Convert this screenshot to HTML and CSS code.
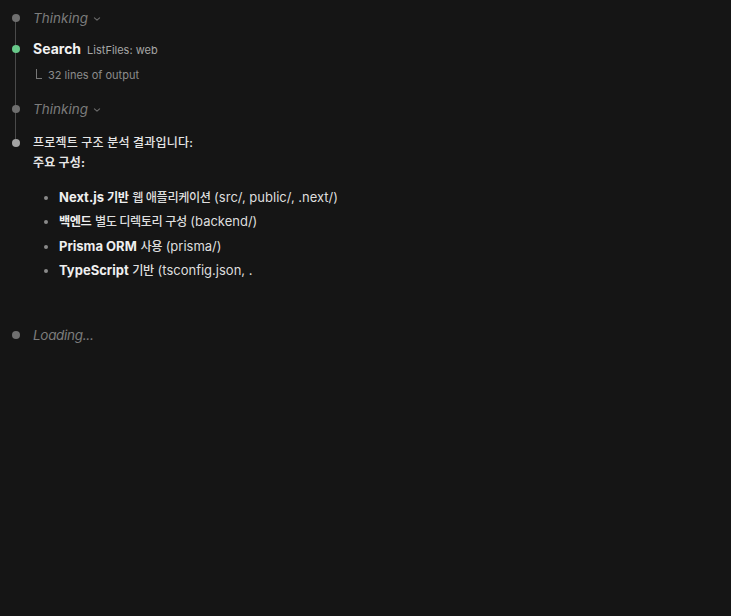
FILE: index.html
```html
<!DOCTYPE html>
<html lang="ko">
<head>
<meta charset="utf-8">
<link rel="stylesheet" href="styles.css">
</head>
<body>
<div class="timeline">
  <div class="step step-thinking first">
    <span class="rail"><span class="dot dot-gray"></span></span>
    <span class="thinking">Thinking<svg class="chev" width="8" height="6" viewBox="0 0 8 6"><path d="M1.4 1.8 L4 4.2 L6.6 1.8" fill="none" stroke="currentColor" stroke-width="1.1" stroke-linecap="round" stroke-linejoin="round"/></svg></span>
  </div>
  <div class="step step-search">
    <span class="rail"><span class="dot dot-green"></span></span>
    <div class="body">
      <div class="search-line"><span class="search-title">Search</span><span class="search-arg">ListFiles: web</span></div>
      <div class="sub"><span class="elbow"></span>32 lines of output</div>
    </div>
  </div>
  <div class="step step-thinking2">
    <span class="rail"><span class="dot dot-gray"></span></span>
    <span class="thinking">Thinking<svg class="chev" width="8" height="6" viewBox="0 0 8 6"><path d="M1.4 1.8 L4 4.2 L6.6 1.8" fill="none" stroke="currentColor" stroke-width="1.1" stroke-linecap="round" stroke-linejoin="round"/></svg></span>
  </div>
  <div class="step step-message last">
    <span class="rail"><span class="dot dot-light"></span></span>
    <div class="body message">
      <p class="line">프로젝트 구조 분석 결과입니다:</p>
      <p class="line strong">주요 구성:</p>
      <ul class="list">
        <li><b>Next.js <span class="ko">기반</span></b> <span class="ko">웹 애플리케이션</span> (src/, public/, .next/)</li>
        <li><b class="ko">백엔드</b> <span class="ko">별도 디렉토리 구성</span> (backend/)</li>
        <li><b>Prisma ORM</b> <span class="ko">사용</span> (prisma/)</li>
        <li><b>TypeScript</b> <span class="ko">기반</span> (tsconfig.json, .</li>
      </ul>
    </div>
  </div>
</div>
<div class="step step-loading">
  <span class="rail"><span class="dot dot-gray"></span></span>
  <span class="thinking loading">Loading...</span>
</div>
</body>
</html>
```
FILE: styles.css
```css
html, body {
  margin: 0;
  padding: 0;
  background: #151515;
  height: 100%;
}
body {
  font-family: Inter, "Noto Sans CJK KR", "Noto Sans", sans-serif;
  color: #e4e4e4;
  -webkit-font-smoothing: antialiased;
}
.timeline {
  position: relative;
  padding-top: 8px;
}
.timeline::before {
  content: "";
  position: absolute;
  left: 15px;
  width: 1px;
  top: 18px;
  height: 124px;
  background: #4a4a4a;
}
.step {
  display: flex;
  align-items: flex-start;
  position: relative;
}
.rail {
  width: 33px;
  height: 20px;
  flex: none;
  display: flex;
  align-items: center;
  padding-left: 12px;
  box-sizing: border-box;
}
.dot {
  width: 8px;
  height: 8px;
  border-radius: 50%;
  display: block;
}
.dot-gray { background: #6f6f6f; }
.dot-green { background: #68c98a; }
.dot-light { background: #a3a3a3; }
.thinking {
  font-style: italic;
  font-size: 13.5px;
  line-height: 20px;
  color: #7c7c7c;
  display: flex;
  align-items: center;
}
.loading { letter-spacing: -0.3px; }
.chev { color: #6c6c6c; margin-left: 5px; margin-top: 1px; }
.step-search { margin-top: 11px; }
.search-line {
  display: flex;
  align-items: baseline;
  gap: 6px;
  line-height: 20px;
}
.search-title {
  font-weight: 700;
  font-size: 14px;
  color: #f2f2f2;
}
.search-arg {
  font-size: 11px;
  color: #a6a6a6;
}
.sub {
  margin-top: 7px;
  font-size: 11px;
  line-height: 16px;
  color: #8c8c8c;
  display: flex;
  align-items: center;
}
.elbow {
  width: 5px;
  height: 9px;
  border-left: 1px solid #777;
  border-bottom: 1px solid #777;
  margin: 0 6px 2px 3px;
}
.step-thinking2 { margin-top: 16px; }
.step-message { margin-top: 14px; }
.message p {
  margin: 0;
}
.line {
  font-size: 12px;
  line-height: 20px;
  font-weight: 500;
  color: #e6e6e6;
  letter-spacing: 0.2px;
}
.strong { font-weight: 700; }
.list {
  margin: 12px 0 0 0;
  padding: 0 0 0 26px;
  font-size: 13px;
  color: #dedede;
}
.list li {
  height: 24.3px;
  line-height: 24px;
}
.list li::marker { color: #8a8a8a; }
.list b { font-weight: 700; color: #efefef; }
.ko {
  font-size: 12.2px;
  letter-spacing: -0.45px;
  line-height: 1;
}
.list .ko { font-weight: 500; }
.list b .ko, .list b.ko { font-weight: 700; }
.step-loading { margin-top: 43px; }
```
